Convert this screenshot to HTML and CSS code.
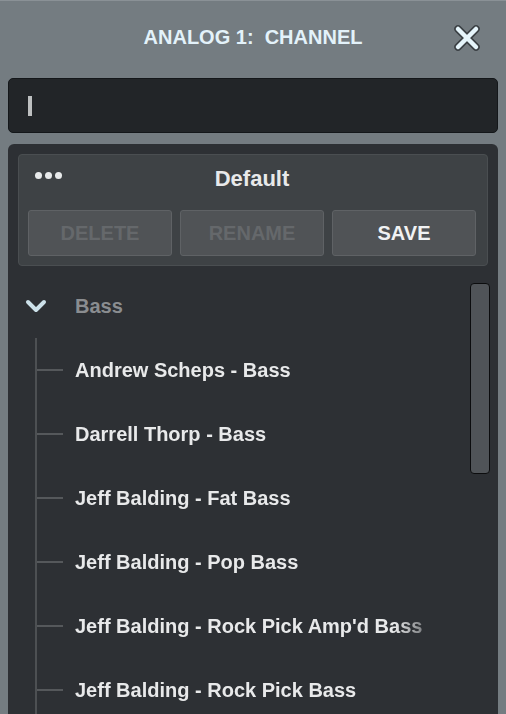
FILE: index.html
```html
<!DOCTYPE html>
<html>
<head>
<meta charset="utf-8">
<link rel="stylesheet" href="styles.css">
</head>
<body>
<div class="app">
  <header class="header">
    <span></span>
    <h1 class="title">ANALOG 1:&nbsp; CHANNEL</h1>
    <button class="close" aria-label="Close">
      <svg width="28" height="28" viewBox="0 0 28 28">
        <path d="M5 5 L23 23 M23 5 L5 23" stroke="#3a3f43" stroke-width="7.5" stroke-linecap="round" fill="none"/>
        <path d="M5 5 L23 23 M23 5 L5 23" stroke="#e6f5fb" stroke-width="4.5" stroke-linecap="round" fill="none"/>
      </svg>
    </button>
  </header>

  <div class="search"><span class="caret"></span></div>

  <section class="panel">
    <div class="preset">
      <div class="preset-head">
        <span class="dots"><i></i><i></i><i></i></span>
        <span class="preset-name">Default</span>
      </div>
      <div class="buttons">
        <button class="btn disabled">DELETE</button>
        <button class="btn disabled">RENAME</button>
        <button class="btn">SAVE</button>
      </div>
    </div>

    <div class="tree">
      <div class="group-row">
        <svg class="chev" width="24" height="16" viewBox="0 0 24 16">
          <path d="M4 4 L12 12 L20 4" stroke="#cde1ea" stroke-width="4" stroke-linecap="round" stroke-linejoin="round" fill="none"/>
        </svg>
        <span class="group-name">Bass</span>
      </div>
      <div class="items">
        <div class="item"><span class="tick"></span><span class="label">Andrew Scheps - Bass</span></div>
        <div class="item"><span class="tick"></span><span class="label">Darrell Thorp - Bass</span></div>
        <div class="item"><span class="tick"></span><span class="label">Jeff Balding - Fat Bass</span></div>
        <div class="item"><span class="tick"></span><span class="label">Jeff Balding - Pop Bass</span></div>
        <div class="item"><span class="tick"></span><span class="label">Jeff Balding - Rock Pick Amp'd Bass</span></div>
        <div class="item"><span class="tick"></span><span class="label">Jeff Balding - Rock Pick Bass</span></div>
        <div class="item"><span class="tick"></span></div>
      </div>
    </div>

    <div class="scrollbar"></div>
  </section>
</div>
</body>
</html>
```

FILE: styles.css
```css
* { box-sizing: border-box; }
html, body {
  margin: 0;
  padding: 0;
  width: 506px;
  height: 714px;
  overflow: hidden;
  background: #747c81;
  font-family: "Liberation Sans", Arial, sans-serif;
}
.app {
  height: 714px;
  border-top: 1px solid #8a9196;
  display: flex;
  flex-direction: column;
}
.header {
  height: 73px;
  display: grid;
  grid-template-columns: 1fr auto 1fr;
  align-items: center;
}
.title {
  margin: 0;
  font-size: 20px;
  font-weight: bold;
  color: #e3f2fa;
  letter-spacing: 0;
}
.close {
  justify-self: end;
  margin-right: 25px;
  padding: 0;
  border: 0;
  background: none;
  width: 28px;
  height: 28px;
  display: flex;
}
.search {
  margin: 4px 8px 0;
  height: 55px;
  background: #222528;
  border: 1.5px solid #14171a;
  border-radius: 5px;
  display: flex;
  align-items: center;
  padding-left: 18.5px;
}
.caret {
  width: 4px;
  height: 20px;
  background: #bdbfc0;
}
.panel {
  position: relative;
  margin: 11px 8px 0;
  flex: 1;
  background: #2d3034;
  border-radius: 6px 6px 0 0;
  padding: 10px;
  overflow: hidden;
}
.preset {
  background: #3e4245;
  border: 1px solid #4a4e51;
  border-radius: 4px;
  padding: 0 11px 9px 9px;
}
.preset-head {
  position: relative;
  height: 55px;
  display: flex;
  align-items: center;
  justify-content: center;
}
.dots {
  position: absolute;
  left: 7px;
  top: 17px;
  display: flex;
  gap: 3px;
}
.dots i {
  width: 7px;
  height: 7px;
  border-radius: 50%;
  background: #e8eaeb;
}
.preset-name {
  font-size: 22px;
  font-weight: bold;
  color: #e8e9ea;
  margin-top: -8px;
}
.buttons {
  display: grid;
  grid-template-columns: repeat(3, 1fr);
  gap: 8px;
}
.btn {
  height: 46px;
  background: #505356;
  border: 1.5px solid #5f6265;
  border-radius: 3px;
  font-family: "Liberation Sans", Arial, sans-serif;
  font-size: 20px;
  font-weight: bold;
  color: #f1f2f3;
  padding: 0;
}
.btn.disabled {
  color: #65686b;
}
.tree {
  padding-top: 8px;
}
.group-row {
  height: 64px;
  display: flex;
  align-items: center;
  padding-left: 6px;
}
.chev {
  display: block;
  margin-right: 27px;
}
.group-name {
  font-size: 20px;
  font-weight: bold;
  color: #8a8d90;
}
.items {
  margin-left: 17px;
  border-left: 2px solid #4d5053;
}
.item {
  height: 64px;
  display: flex;
  align-items: center;
}
.tick {
  width: 26px;
  height: 2px;
  background: #55585b;
  margin-right: 12px;
}
.label {
  width: 352px;
  white-space: nowrap;
  overflow: hidden;
  font-size: 20px;
  font-weight: bold;
  color: #e8e9ea;
  -webkit-mask-image: linear-gradient(to right, #000 320px, rgba(0,0,0,0.35) 352px);
  mask-image: linear-gradient(to right, #000 320px, rgba(0,0,0,0.35) 352px);
}
.scrollbar {
  position: absolute;
  top: 139px;
  right: 8px;
  width: 20px;
  height: 191px;
  background: #505458;
  border: 1.5px solid #0c0d0e;
  border-radius: 4px;
}
```
